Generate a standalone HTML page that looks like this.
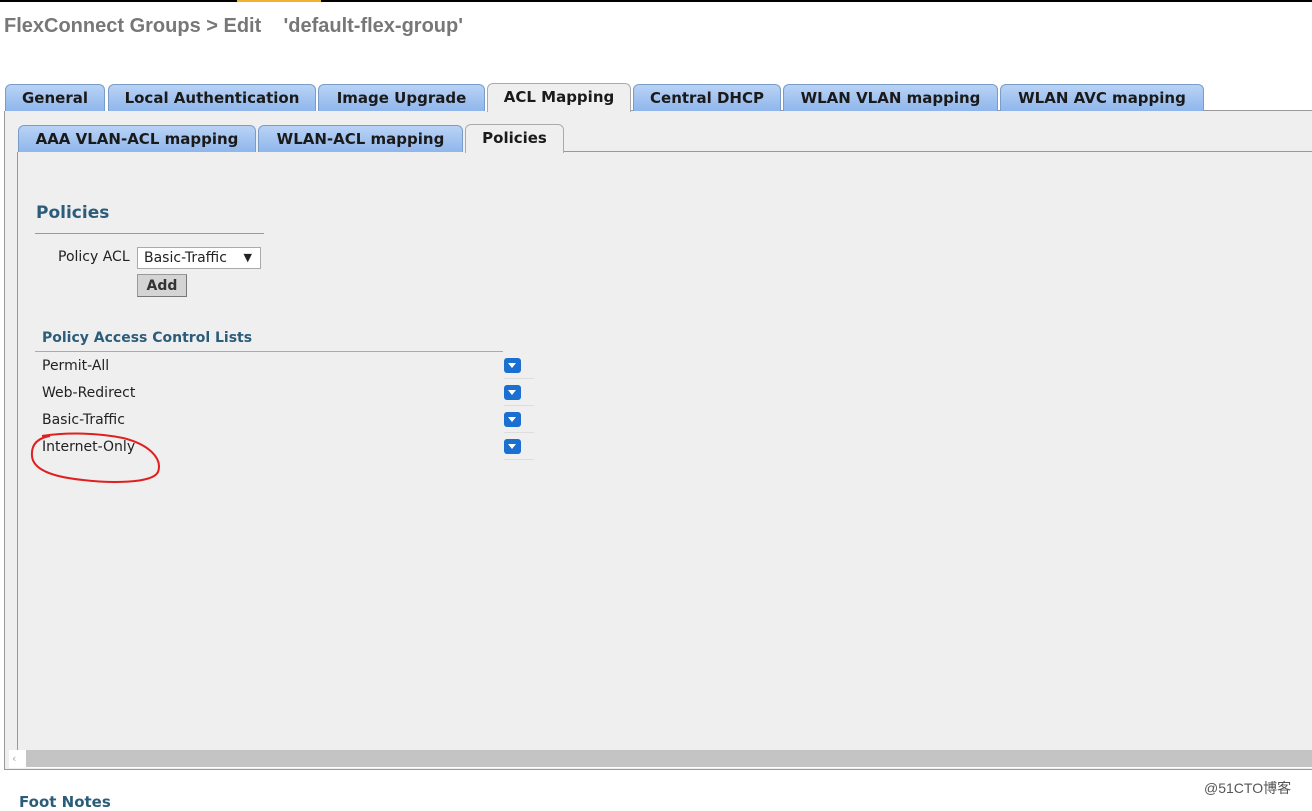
<!DOCTYPE html>
<html><head><meta charset="utf-8"><style>
body{margin:0;width:1312px;height:804px;background:#fff;position:relative;overflow:hidden;font-family:"DejaVu Sans","Liberation Sans",sans-serif;}
.a{position:absolute;}
.tab{position:absolute;height:27px;background:linear-gradient(#b9d3f5,#8fb6ec);border:1px solid #7a9cc8;border-bottom:none;border-radius:6px 6px 0 0;font-weight:bold;font-size:15px;color:#1a1a1a;text-align:center;line-height:27px;box-sizing:border-box;}
.act{background:#efefef;border-color:#aaa;}
.row{position:absolute;left:42px;font-size:14px;color:#222;}
.dd{position:absolute;left:504px;width:17px;height:15px;background:#1b6fd1;border-radius:3px;}
.dd:after{content:"";position:absolute;left:4px;top:5px;border-left:4.5px solid transparent;border-right:4.5px solid transparent;border-top:5px solid #fff;}
.sep{position:absolute;left:504px;width:30px;height:1px;background:#ddd;}
</style></head><body>
<div class="a" style="left:0;top:0;width:1312px;height:2px;background:#000"></div>
<div class="a" style="left:237px;top:0;width:84px;height:2px;background:#f0b030"></div>
<div class="a" style="left:4px;top:15px;font-family:'Liberation Sans',sans-serif;font-weight:bold;font-size:20px;color:#777">FlexConnect Groups &gt; Edit &nbsp;&nbsp; 'default-flex-group'</div>

<div class="a" style="left:4px;top:111px;width:1308px;height:658px;background:#efefef;border-left:1px solid #999;border-bottom:1px solid #999"></div>
<div class="a" style="left:631px;top:110px;width:681px;height:1px;background:#999"></div>
<div class="tab" style="left:5px;top:84px;width:100px">General</div>
<div class="tab" style="left:108px;top:84px;width:208px">Local Authentication</div>
<div class="tab" style="left:318px;top:84px;width:167px">Image Upgrade</div>
<div class="tab act" style="left:487px;top:83px;width:144px;height:29px">ACL Mapping</div>
<div class="tab" style="left:633px;top:84px;width:148px">Central DHCP</div>
<div class="tab" style="left:783px;top:84px;width:215px">WLAN VLAN mapping</div>
<div class="tab" style="left:1000px;top:84px;width:204px">WLAN AVC mapping</div>

<div class="a" style="left:17px;top:152px;width:1295px;height:598px;border-left:1px solid #999"></div>
<div class="a" style="left:564px;top:151px;width:748px;height:1px;background:#999"></div>
<div class="tab" style="left:18px;top:125px;width:238px">AAA VLAN-ACL mapping</div>
<div class="tab" style="left:258px;top:125px;width:205px">WLAN-ACL mapping</div>
<div class="tab act" style="left:465px;top:124px;width:99px;height:29px">Policies</div>

<div class="a" style="left:36px;top:203px;font-weight:bold;font-size:17px;color:#2b5d7a">Policies</div>
<div class="a" style="left:35px;top:233px;width:229px;height:1px;background:#999"></div>
<div class="a" style="left:58px;top:249px;font-size:14px;color:#222">Policy ACL</div>
<div class="a" style="left:137px;top:247px;width:122px;height:20px;background:#fff;border:1px solid #aaa;font-size:14px;line-height:20px;color:#222"><span style="padding-left:6px">Basic-Traffic</span><span style="position:absolute;right:8px;font-size:11px">▼</span></div>
<div class="a" style="left:137px;top:274px;width:48px;height:21px;background:#d4d4d4;border:1px solid #999;border-right-color:#777;border-bottom-color:#777;font-weight:bold;font-size:14px;text-align:center;line-height:22px;color:#333">Add</div>

<div class="a" style="left:42px;top:330px;font-weight:bold;font-size:14px;color:#2b5d7a">Policy Access Control Lists</div>
<div class="a" style="left:35px;top:351px;width:468px;height:1px;background:#aaa"></div>
<div class="row" style="top:358px">Permit-All</div>
<div class="row" style="top:385px">Web-Redirect</div>
<div class="row" style="top:412px">Basic-Traffic</div>
<div class="row" style="top:439px">Internet-Only</div>
<div class="dd" style="top:358px"></div><div class="sep" style="top:378px"></div>
<div class="dd" style="top:385px"></div><div class="sep" style="top:405px"></div>
<div class="dd" style="top:412px"></div><div class="sep" style="top:432px"></div>
<div class="dd" style="top:439px"></div><div class="sep" style="top:459px"></div>
<svg class="a" style="left:28px;top:430px" width="140" height="58"><path d="M14 6 C40 2 70 3 95 8 C120 14 135 28 130 42 C124 54 80 53 55 50 C25 47 5 40 4 26 C3 14 10 8 22 6" fill="none" stroke="#e02020" stroke-width="2"/></svg>

<div class="a" style="left:9px;top:750px;width:1303px;height:18px;background:#fff"></div>
<div class="a" style="left:26px;top:750px;width:1286px;height:17px;background:#c4c4c4"></div>
<div class="a" style="left:12px;top:752px;font-size:11px;color:#aaa">‹</div>
<div class="a" style="left:1204px;top:778px;font-size:14px;color:#555;font-family:'Liberation Sans','Noto Sans CJK SC',sans-serif">@51CTO博客</div>
<div class="a" style="left:19px;top:793px;font-weight:bold;font-size:15px;color:#2b5d7a">Foot Notes</div>
</body></html>
